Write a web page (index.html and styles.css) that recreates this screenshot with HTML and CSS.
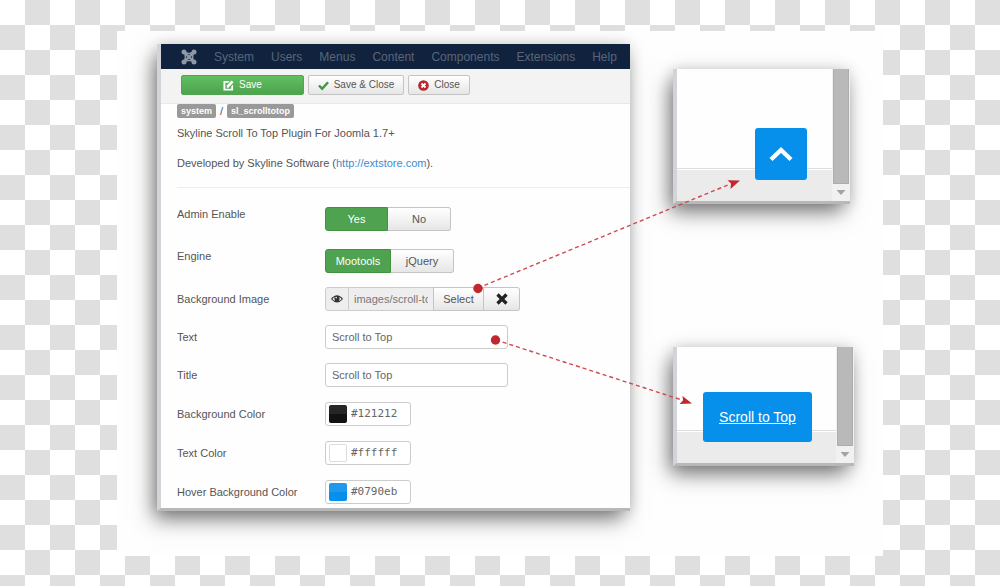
FILE: index.html
```html
<!DOCTYPE html>
<html lang="en">
<head>
<meta charset="utf-8">
<title>Skyline Scroll To Top Plugin</title>
<link rel="stylesheet" href="styles.css">
</head>
<body>
<main class="stage">
  <section class="panel admin">
    <nav class="nav">
      <a class="logo" href="#" aria-label="Joomla">
        <svg viewBox="0 0 16 16" width="16" height="16">
          <g fill="none" stroke="currentColor">
            <path d="M3 3l10 10M13 3L3 13" stroke-width="2.400"/>
            <path d="M3 3Q8 6 13 3M3 13Q8 10 13 13M3 3Q6 8 3 13M13 3Q10 8 13 13" stroke-width="1.600"/>
          </g>
          <g fill="currentColor"><circle cx="3" cy="3" r="2.500"/><circle cx="13" cy="3" r="2.500"/><circle cx="3" cy="13" r="2.500"/><circle cx="13" cy="13" r="2.500"/></g>
        </svg>
      </a>
      <a href="#">System</a><a href="#">Users</a><a href="#">Menus</a><a href="#">Content</a><a href="#">Components</a><a href="#">Extensions</a><a href="#">Help</a>
    </nav>
    <div class="toolbar">
      <button class="btn save" type="button">
        <svg viewBox="0 0 12 12" width="11" height="11"><path d="M.500 1h7L5.500 3H2.500v6.500H9V7l2-2v6.500H.500z" fill="currentColor"/><path d="M4 8.500V6L9.500.500l2 2L6 8.500z" fill="currentColor"/></svg>
        Save</button>
      <button class="btn apply" type="button">
        <svg viewBox="0 0 12 12" width="11" height="11"><path d="M1 6l3.500 3.500L11 2.500" fill="none" stroke="#409740" stroke-width="2.600"/></svg>
        Save &amp; Close</button>
      <button class="btn close" type="button">
        <svg viewBox="0 0 12 12" width="11" height="11"><circle cx="6" cy="6" r="5.800" fill="#bd262d"/><path d="M3.800 3.800l4.400 4.400M8.200 3.800L3.800 8.200" stroke="#fff" stroke-width="2"/></svg>
        Close</button>
    </div>
    <div class="content">
      <div class="crumbs"><span class="tag">system</span><span>/</span><span class="tag">sl_scrolltotop</span></div>
      <p>Skyline Scroll To Top Plugin For Joomla 1.7+</p>
      <p>Developed by Skyline Software (<a href="#">http://extstore.com</a>).</p>
      <hr>
      <form class="form">
        <div class="row toggle-row" role="radiogroup" aria-labelledby="enable">
          <span id="enable">Admin Enable</span>
          <div class="toggle enable">
            <label><input type="radio" name="enable" checked><span>Yes</span></label>
            <label><input type="radio" name="enable"><span>No</span></label>
          </div>
        </div>
        <div class="row toggle-row" role="radiogroup" aria-labelledby="engine">
          <span id="engine">Engine</span>
          <div class="toggle engine">
            <label><input type="radio" name="engine" checked><span>Mootools</span></label>
            <label><input type="radio" name="engine"><span>jQuery</span></label>
          </div>
        </div>
        <div class="row">
          <label for="image">Background Image</label>
          <div class="media">
            <span class="eye"><svg viewBox="0 0 12 10" width="12" height="10"><path d="M0 5Q6-2.500 12 5Q6 12 0 5z" fill="#333"/><path d="M1.400 5Q2.500 3.500 3.600 3Q3 5 4 7Q2.500 6.500 1.400 5zM10.600 5Q9.500 3.500 8.400 3Q9 5 8 7Q9.500 6.500 10.600 5z" fill="#eee"/><circle cx="5.200" cy="3.600" r=".8" fill="#eee"/></svg></span>
            <input id="image" type="text" value="images/scroll-top.png" readonly>
            <button class="btn select" type="button">Select</button>
            <button class="btn clear" type="button" aria-label="Clear"><svg viewBox="0 0 12 12" width="12" height="12"><path d="M1.500 1.500l9 9M10.500 1.500l-9 9" stroke="#222" stroke-width="3.200"/></svg></button>
          </div>
        </div>
        <div class="row"><label for="text">Text</label><input class="field" id="text" type="text" value="Scroll to Top"></div>
        <div class="row"><label for="title">Title</label><input class="field" id="title" type="text" value="Scroll to Top"></div>
        <div class="row color-row"><label for="bg">Background Color</label><div class="color"><span class="swatch black"></span><input id="bg" type="text" value="#121212"></div></div>
        <div class="row color-row"><label for="fg">Text Color</label><div class="color"><span class="swatch white"></span><input id="fg" type="text" value="#ffffff"></div></div>
        <div class="row color-row"><label for="hover">Hover Background Color</label><div class="color"><span class="swatch blue"></span><input id="hover" type="text" value="#0790eb"></div></div>
      </form>
    </div>
  </section>
  <div class="previews">
    <section class="panel preview icon-preview">
      <div class="page"><div class="footer"></div></div>
      <div class="scrollbar"><span class="thumb"></span><span class="down"></span></div>
      <button class="totop" type="button" aria-label="Scroll to top"><svg viewBox="0 0 24 16" width="24" height="16"><path d="M2 13.500L12 4l10 9.500" fill="none" stroke="#fff" stroke-width="4.400"/></svg></button>
    </section>
    <section class="panel preview text-preview">
      <div class="page"><div class="footer"></div></div>
      <div class="scrollbar"><span class="thumb"></span><span class="down"></span></div>
      <a class="totop" href="#">Scroll to Top</a>
    </section>
  </div>
  <svg class="arrows" viewBox="0 0 766 525">
    <g stroke="#d0494e" stroke-width="1.400" stroke-dasharray="4 3" fill="none">
      <path d="M361 257L612 153.500"/><path d="M379 309L565 369"/>
    </g>
    <g fill="#c1272d">
      <circle cx="361" cy="257.500" r="4.700"/><circle cx="378.500" cy="309" r="4.700"/>
      <path d="M623 149.500l-12.500-.300 3.500 3.300-.500 5.500z"/>
      <path d="M575 372.500l-9.500-7.500.500 4.500-3.500 3.500z"/>
    </g>
  </svg>
</main>
</body>
</html>
```
FILE: styles.css
```css
* { box-sizing: border-box; }
body {
  margin: 0;
  min-height: 100vh;
  padding: 31px 117px 30px;
  background: conic-gradient(#dfdfdf 25%, #fff 0 50%, #dfdfdf 0 75%, #fff 0) 0 0 / 50px 50px;
  font: 11px/16px "Liberation Sans", Arial, sans-serif;
  color: #555;
}
button, input { font: inherit; color: inherit; margin: 0; }
a { color: #3b8dd0; text-decoration: none; }
.stage {
  position: relative;
  display: grid;
  grid-template-columns: 473fr 181fr;
  align-items: start;
  column-gap: 43px;
  padding: 13px 29px 45px 40px;
  background: #fefefe;
}
.panel {
  border-left: 4px solid #d3d3da;
  border-bottom: 3px solid #b8b8b8;
  background: #fefefe;
  box-shadow: -5px 10px 20px -2px rgba(0, 0, 0, .52), 0 0 14px rgba(0, 0, 0, .14);
}
.nav {
  display: flex;
  align-items: center;
  gap: 17px;
  height: 25px;
  padding: 0 9px 0 20px;
  background: #10223e;
  font-size: 12px;
}
.nav a { color: #596679; }
.nav .logo { display: flex; color: #8f98a5; }
.toolbar {
  display: flex;
  gap: 4px;
  padding: 6px 20px 8px;
  background: #f3f3f3;
  border-bottom: 1px solid #e8e8e8;
}
.btn {
  display: flex;
  align-items: center;
  justify-content: center;
  gap: 5px;
  height: 20px;
  padding: 0;
  border: 1px solid #c4c4c4;
  border-radius: 2px;
  background: linear-gradient(#fff, #e6e6e6);
}
.toolbar .btn { font-size: 10px; }
.toolbar .save { width: 123px; background: linear-gradient(#5fc05f, #4ea34e); border-color: #50a550; color: #fff; }
.apply { width: 96px; }
.close { width: 62px; }
.content { padding: 0 0 4px 16px; }
.crumbs { display: flex; gap: 4px; line-height: 14px; }
.tag {
  padding: 0 4px;
  border-radius: 2px;
  background: #999;
  color: #fff;
  font-size: 9px;
  font-weight: bold;
}
p { margin: 7px 0 14px; }
hr { margin: 16px 0 19px; border: 0; border-top: 1px solid #eee; }
.form { display: grid; gap: 14px; }
.row { display: grid; grid-template-columns: 148px 1fr; align-items: center; min-height: 24px; }
.color-row { min-height: 25px; }
.toggle-row { align-items: start; line-height: 14px; }
.toggle-row:first-child { padding-bottom: 4px; }
.toggle { display: flex; }
.toggle input { position: absolute; opacity: 0; }
.toggle span {
  display: block;
  width: 63px;
  height: 24px;
  line-height: 22px;
  text-align: center;
  border: 1px solid #c4c4c4;
  border-left: 0;
  border-radius: 0 3px 3px 0;
  background: linear-gradient(#fff, #e6e6e6);
}
.toggle :checked + span {
  border: 1px solid #429242;
  border-radius: 3px 0 0 3px;
  background: #4fa24f;
  color: #fff;
}
.engine :checked + span { width: 66px; }
.media { display: flex; height: 24px; }
.eye {
  display: flex;
  align-items: center;
  justify-content: center;
  width: 24px;
  border: 1px solid #ccc;
  border-radius: 3px 0 0 3px;
  background: #eee;
}
.media input { width: 84px; padding: 0 5px; border: 1px solid #ccc; border-width: 1px 0; background: #eee; color: #777; }
.media .btn { height: 24px; }
.select { width: 51px; border-radius: 0; }
.clear { width: 36px; border-left: 0; border-radius: 0 3px 3px 0; }
.field, .color { height: 24px; border: 1px solid #ccc; border-radius: 3px; background: #fff; }
.field { width: 183px; padding: 0 6px; color: #666; }
.color { display: flex; align-items: center; gap: 4px; width: 86px; padding: 0 3px; color: #666; }
.color input {
  width: 56px;
  padding: 0;
  border: 0;
  background: none;
  font-family: "DejaVu Sans Mono", monospace;
}
.swatch { width: 18px; height: 18px; border-radius: 2px; }
.black { background: linear-gradient(#262626 50%, #121212 0); }
.white { background: #fff; border: 1px solid #ddd; }
.blue { background: linear-gradient(#2098ec 50%, #0790eb 0); }
.previews { display: grid; gap: 143px; padding-top: 25px; }
.preview { display: grid; grid-template-columns: 1fr 18px; }
.page, .scrollbar, .totop { grid-row: 1; }
.page { grid-column: 1; display: flex; align-items: flex-end; }
.footer { width: 100%; height: 33px; background: #ebebeb; border-top: 1px solid #ddd; box-shadow: inset 0 1px #fff; }
.icon-preview { height: 135px; margin-right: 4px; }
.text-preview { height: 119px; }
.scrollbar { grid-column: 2; display: flex; flex-direction: column; align-items: center; background: #f1f1f1; }
.thumb { flex: 1; width: 16px; background: #b9b9b9; border: 1px solid #adadad; border-top: 0; }
.down { width: 9px; height: 5px; margin: 6px 0; background: #a3a3a3; clip-path: polygon(0 0, 100% 0, 50% 100%); }
.totop {
  grid-column: 1;
  z-index: 1;
  align-self: end;
  justify-self: end;
  display: grid;
  place-items: center;
  width: 52px;
  height: 52px;
  padding: 0;
  margin: 0 25px 21px 0;
  border: 0;
  border-radius: 3px;
  background: #0790eb;
}
.text-preview .totop { width: 109px; height: 50px; margin-right: 24px; color: #fff; font-size: 14px; text-decoration: underline; }
.arrows { position: absolute; z-index: 2; inset: 0; width: 100%; height: 100%; pointer-events: none; }
```
